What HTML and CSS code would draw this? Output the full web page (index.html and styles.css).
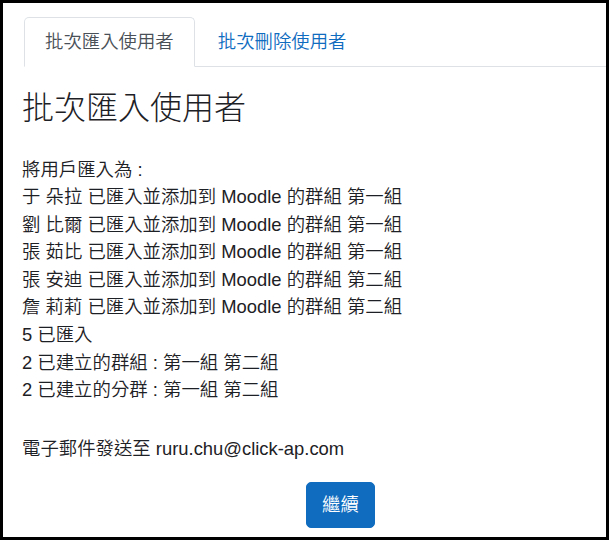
FILE: index.html
```html
<!DOCTYPE html>
<html lang="zh-Hant">
<head>
<meta charset="utf-8">
<title>批次匯入使用者</title>
<link rel="stylesheet" href="styles.css">
</head>
<body>
<div class="page">
  <ul class="tabs">
    <li class="tab active">批次匯入使用者</li>
    <li class="tab link">批次刪除使用者</li>
  </ul>
  <div class="content">
    <h2 class="title">批次匯入使用者</h2>
    <div class="result">
      <div>將用戶匯入為 :</div>
      <div>于 朵拉 已匯入並添加到 Moodle 的群組 第一組</div>
      <div>劉 比爾 已匯入並添加到 Moodle 的群組 第一組</div>
      <div>張 茹比 已匯入並添加到 Moodle 的群組 第一組</div>
      <div>張 安迪 已匯入並添加到 Moodle 的群組 第二組</div>
      <div>詹 莉莉 已匯入並添加到 Moodle 的群組 第二組</div>
      <div>5 已匯入</div>
      <div>2 已建立的群組 : 第一組 第二組</div>
      <div>2 已建立的分群 : 第一組 第二組</div>
    </div>
    <p class="email">電子郵件發送至 ruru.chu@click-ap.com</p>
    <div class="actions">
      <button class="btn" type="button">繼續</button>
    </div>
  </div>
</div>
</body>
</html>
```
FILE: styles.css
```css
html {
  background: #000;
  margin: 0;
  padding: 0;
}
body {
  margin: 3px 3px 3px 3px;
  background: #fff;
  height: 534px;
  overflow: hidden;
  font-family: "Liberation Sans", "Noto Sans CJK TC", sans-serif;
  font-size: 18.4px;
  line-height: 27.6px;
  font-weight: 350;
  color: #1d2125;
}
.page {
  padding-top: 14px;
}
.tabs {
  list-style: none;
  margin: 0 0 0 21px;
  padding: 0;
  display: flex;
  border-bottom: 1px solid #dee2e6;
}
.tab {
  padding: 10px 20px;
  border: 1px solid transparent;
  border-top-left-radius: 5px;
  border-top-right-radius: 5px;
  margin-bottom: -1px;
}
.tab.active {
  color: #495057;
  background: #fff;
  border-color: #dee2e6 #dee2e6 #fff;
}
.tab.link {
  color: #0f6cbf;
  margin-left: 2px;
}
.content {
  padding-left: 19px;
}
.title {
  margin: 22px 0 28.5px;
  font-size: 32px;
  line-height: 38.4px;
  font-weight: 300;
}
.email {
  margin: 31.5px 0 0;
}
.actions {
  margin-top: 19px;
  padding-left: 284px;
}
.btn {
  width: 69px;
  height: 46px;
  background: #0f6cbf;
  color: #fff;
  border: 1px solid #0f6cbf;
  border-radius: 5px;
  font-family: inherit;
  font-size: 18.4px;
  font-weight: 350;
  line-height: 27.6px;
  padding: 0;
}
```
